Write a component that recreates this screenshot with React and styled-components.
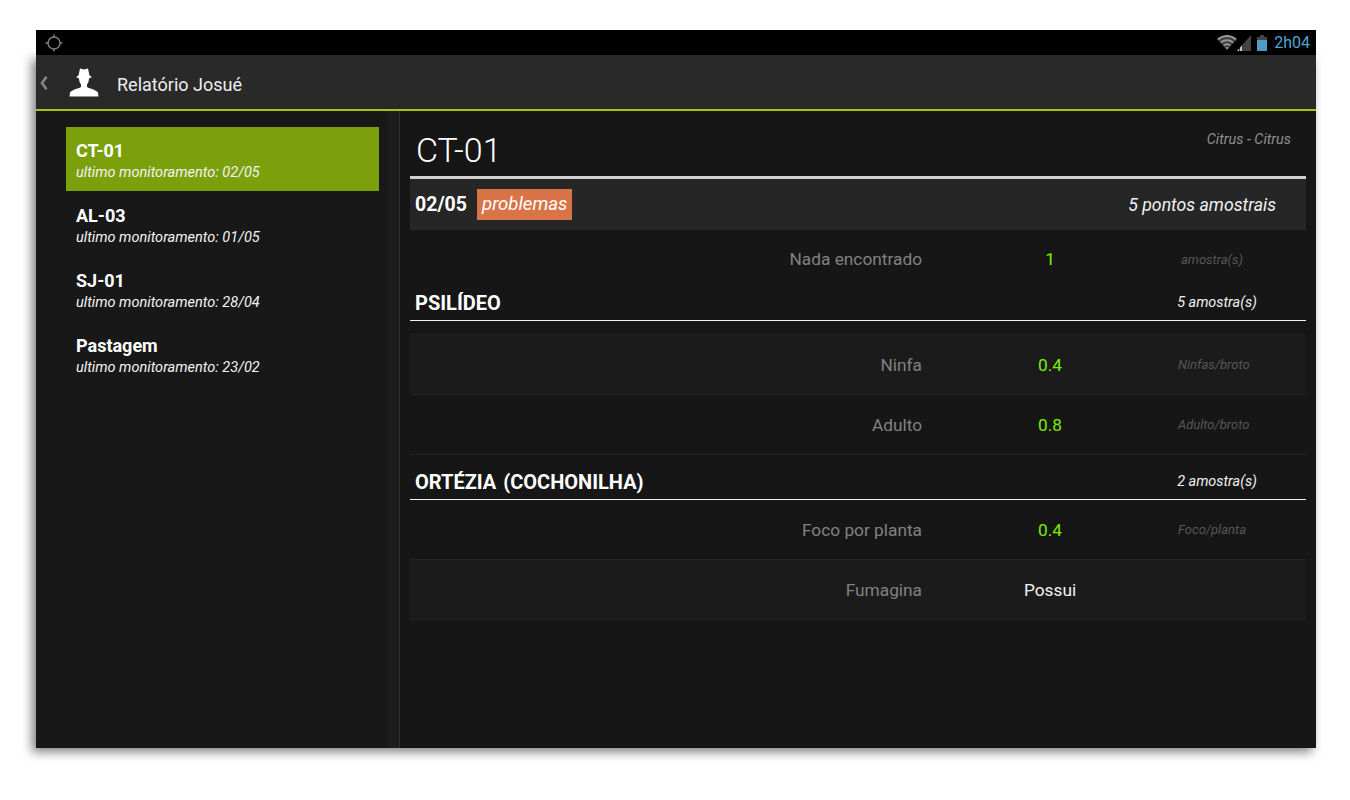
import styled, { createGlobalStyle } from 'styled-components';

const GlobalStyle = createGlobalStyle`
  html, body {
    margin: 0;
    padding: 0;
    background: #fff;
  }
  body {
    font-family: Roboto, "Liberation Sans", sans-serif;
  }
`;

const SITES = [
  { name: 'CT-01', date: '02/05', active: true },
  { name: 'AL-03', date: '01/05' },
  { name: 'SJ-01', date: '28/04' },
  { name: 'Pastagem', date: '23/02' },
];

function TargetIcon() {
  return (
    <svg width="18" height="18" viewBox="0 0 18 18" fill="none" stroke="#7d7d7d">
      <circle cx="9" cy="9" r="6" strokeWidth="1.5" />
      <path d="M9 0.5V3.5M9 14.5v3M0.5 9H3.5M14.5 9h3" strokeWidth="1.6" />
    </svg>
  );
}

function WifiIcon() {
  return (
    <svg width="20" height="15" viewBox="0 0 20 15" fill="none" stroke="#959595" strokeWidth="2">
      <path d="M0 4.2C5.6 -1 14.4 -1 20 4.2L10 15Z" fill="#3c3c3c" stroke="none" />
      <path d="M1 4.4C6.2 0 13.8 0 19 4.4" />
      <path d="M3.9 7.5C7.4 4.6 12.6 4.6 16.1 7.5" />
      <path d="M6.7 10.5C8.7 9 11.3 9 13.3 10.5" />
      <path d="M8.2 12.4C9.3 11.7 10.7 11.7 11.8 12.4L10 14.8Z" fill="#959595" stroke="none" />
    </svg>
  );
}

function SignalIcon() {
  return (
    <svg width="14" height="16" viewBox="0 0 14 16">
      <path d="M14 0V16H0Z" fill="#444" />
      <path d="M0 16L2 13.8V16ZM3 16V12.8L5 10.6V16Z" fill="#c8c8c8" />
    </svg>
  );
}

function BatteryIcon() {
  return (
    <svg width="10" height="16" viewBox="0 0 10 16">
      <path d="M3 0H7V2H10V16H0V2H3Z" fill="#444" />
      <rect y="5" width="10" height="11" fill="#4f9cc4" />
    </svg>
  );
}

function AgentIcon() {
  return (
    <svg width="30" height="29" viewBox="0 0 30 29" fill="#fff">
      <path d="M11 0.5L15 1.5L19 0.5L20.5 7.5L23 9L20 10.5C20 13 19 15 18 16.5V19C21 20.8 27 21.5 29 24.5L29.5 28.5H0.5L1 24.5C3 21.5 9 20.8 12 19V16.5C11 15 10 13 10 10.5L7 9L9.5 7.5Z" />
    </svg>
  );
}

function Row({ label, value, unit, striped, tone }) {
  return (
    <DataRow $striped={striped}>
      <RowLabel>{label}</RowLabel>
      <RowValue $tone={tone}>{value}</RowValue>
      <RowUnit>{unit}</RowUnit>
    </DataRow>
  );
}

export default function App() {
  return (
    <Page>
      <GlobalStyle />
      <Tablet>
        <StatusBar>
          <TargetIcon />
          <StatusIcons>
            <WifiIcon />
            <SignalIcon />
            <BatterySlot>
              <BatteryIcon />
            </BatterySlot>
            <Clock>2h04</Clock>
          </StatusIcons>
        </StatusBar>
        <Panel>
          <ActionBar>
            <BackChevron viewBox="0 0 8 14" width="8" height="14">
              <path d="M6.5 0.8L2 7L6.5 13.2" fill="none" stroke="#858585" strokeWidth="2.6" />
            </BackChevron>
            <AgentIcon />
            <ActionTitle>Relatório Josué</ActionTitle>
          </ActionBar>
          <Body>
            <Sidebar>
              {SITES.map((site) => (
                <SiteItem key={site.name} $active={site.active}>
                  <SiteName>{site.name}</SiteName>
                  <SiteDate>ultimo monitoramento: {site.date}</SiteDate>
                </SiteItem>
              ))}
            </Sidebar>
            <Main>
              <TitleRow>
                <Title>CT-01</Title>
                <Crop>Citrus - Citrus</Crop>
              </TitleRow>
              <DateBar>
                <DateText>02/05</DateText>
                <ProblemTag>problemas</ProblemTag>
                <Points>5 pontos amostrais</Points>
              </DateBar>
              <NothingRow>
                <RowLabel>Nada encontrado</RowLabel>
                <RowValue>1</RowValue>
                <NothingUnit>amostra(s)</NothingUnit>
              </NothingRow>
              <SectionHead $height={33}>
                <SectionName>PSILÍDEO</SectionName>
                <SectionCount>5 amostra(s)</SectionCount>
              </SectionHead>
              <RowsGap />
              <Row label="Ninfa" value="0.4" unit="Ninfas/broto" striped />
              <Row label="Adulto" value="0.8" unit="Adulto/broto" />
              <SectionHead $height={45}>
                <SectionName>ORTÉZIA&nbsp; (COCHONILHA)</SectionName>
                <SectionCount>2 amostra(s)</SectionCount>
              </SectionHead>
              <Row label="Foco por planta" value="0.4" unit="Foco/planta" />
              <Row label="Fumagina" value="Possui" striped tone="white" />
            </Main>
          </Body>
        </Panel>
      </Tablet>
    </Page>
  );
}

const Page = styled.div`
  width: 1350px;
  height: 800px;
  padding: 30px 34px 52px 36px;
  box-sizing: border-box;
  background: #fff;
  overflow: hidden;
`;

const Tablet = styled.div`
  width: 1280px;
  height: 718px;
  display: flex;
  flex-direction: column;
`;

const StatusBar = styled.div`
  height: 25px;
  flex: none;
  display: flex;
  align-items: center;
  justify-content: space-between;
  padding: 0 6px 0 9px;
  background: #000;
`;

const StatusIcons = styled.div`
  display: flex;
  align-items: center;
`;

const BatterySlot = styled.span`
  display: flex;
  margin-left: 6px;
`;

const Clock = styled.span`
  margin-left: 7px;
  font-size: 16px;
  color: #4fa6d6;
`;

const Panel = styled.div`
  flex: 1;
  min-height: 0;
  display: flex;
  flex-direction: column;
  background: #161616;
  box-shadow: -4px 4px 10px rgba(0, 0, 0, 0.5);
`;

const ActionBar = styled.div`
  height: 53px;
  padding-top: 1px;
  flex: none;
  display: flex;
  align-items: center;
  background: #292929;
  border-bottom: 2px solid #a2c514;
`;

const BackChevron = styled.svg`
  margin: 0 21px 0 4px;
`;

const ActionTitle = styled.div`
  margin: 3px 0 0 18px;
  font-size: 18px;
  color: #eee;
`;

const Body = styled.div`
  flex: 1;
  display: flex;
  min-height: 0;
`;

const Sidebar = styled.div`
  width: 364px;
  flex: none;
  box-sizing: border-box;
  padding: 16px 20px 0 30px;
  background: linear-gradient(to right, #181818 352px, #1c1c1c 352px);
  border-right: 1px solid #2e2e2e;
`;

const SiteItem = styled.div`
  height: 64px;
  margin-bottom: 1px;
  box-sizing: border-box;
  padding: 14px 10px 0;
  background: ${(props) => (props.$active ? '#7c9f0c' : 'transparent')};
`;

const SiteName = styled.div`
  font-size: 18px;
  line-height: 20px;
  font-weight: 700;
  color: #fff;
`;

const SiteDate = styled.div`
  margin-top: 2px;
  font-size: 14.5px;
  line-height: 20px;
  font-style: italic;
  color: #f4f4f4;
`;

const Main = styled.div`
  flex: 1;
  padding: 0 10px;
`;

const TitleRow = styled.div`
  height: 68px;
  display: flex;
  justify-content: space-between;
  align-items: flex-start;
  padding: 0 15px 0 6px;
  box-sizing: border-box;
  border-bottom: 3px solid #cfcfcf;
`;

const Title = styled.div`
  margin-top: 18px;
  font-size: 34px;
  line-height: 42px;
  font-weight: 300;
  color: #fff;
`;

const Crop = styled.div`
  margin-top: 20px;
  font-size: 14.4px;
  line-height: 18px;
  font-style: italic;
  color: #8f8f8f;
`;

const DateBar = styled.div`
  height: 51px;
  display: flex;
  align-items: center;
  padding: 0 30px 0 5px;
  background: #262626;
`;

const DateText = styled.div`
  font-size: 19.5px;
  font-weight: 700;
  color: #fff;
`;

const ProblemTag = styled.div`
  margin-left: 10px;
  margin-bottom: 1px;
  height: 31px;
  padding: 0 5px;
  display: flex;
  align-items: center;
  font-size: 18.6px;
  font-style: italic;
  color: #fff;
  background: #d97348;
`;

const Points = styled.div`
  margin-left: auto;
  font-size: 17.7px;
  font-style: italic;
  color: #f2f2f2;
`;

const DataRow = styled.div`
  height: 60px;
  box-sizing: border-box;
  display: grid;
  grid-template-columns: 512px 256px 1fr;
  align-items: center;
  border-bottom: 1px solid #232323;
  background: ${(props) => (props.$striped ? '#1b1b1b' : 'transparent')};
`;

const NothingRow = styled(DataRow)`
  height: 58px;
  border-bottom: none;
`;

const RowLabel = styled.div`
  font-size: 17.3px;
  text-align: right;
  color: #818181;
`;

const RowValue = styled.div`
  font-size: 17.3px;
  text-align: center;
  color: ${(props) => (props.$tone === 'white' ? '#f2f2f2' : '#7aee00')};
`;

const RowUnit = styled.div`
  font-size: 13px;
  font-style: italic;
  color: #565656;
`;

const NothingUnit = styled(RowUnit)`
  padding-left: 3px;
`;

const SectionHead = styled.div`
  height: ${(props) => props.$height}px;
  box-sizing: border-box;
  display: flex;
  align-items: flex-end;
  justify-content: space-between;
  padding: 0 49px 5px 5px;
  border-bottom: 1px solid #f2f2f2;
`;

const SectionName = styled.div`
  font-size: 20px;
  line-height: 24px;
  font-weight: 700;
  word-spacing: -1.5px;
  color: #fff;
`;

const SectionCount = styled.div`
  font-size: 14.4px;
  line-height: 24px;
  font-style: italic;
  color: #f2f2f2;
`;

const RowsGap = styled.div`
  height: 14px;
  box-sizing: border-box;
  border-bottom: 1px solid #232323;
`;
